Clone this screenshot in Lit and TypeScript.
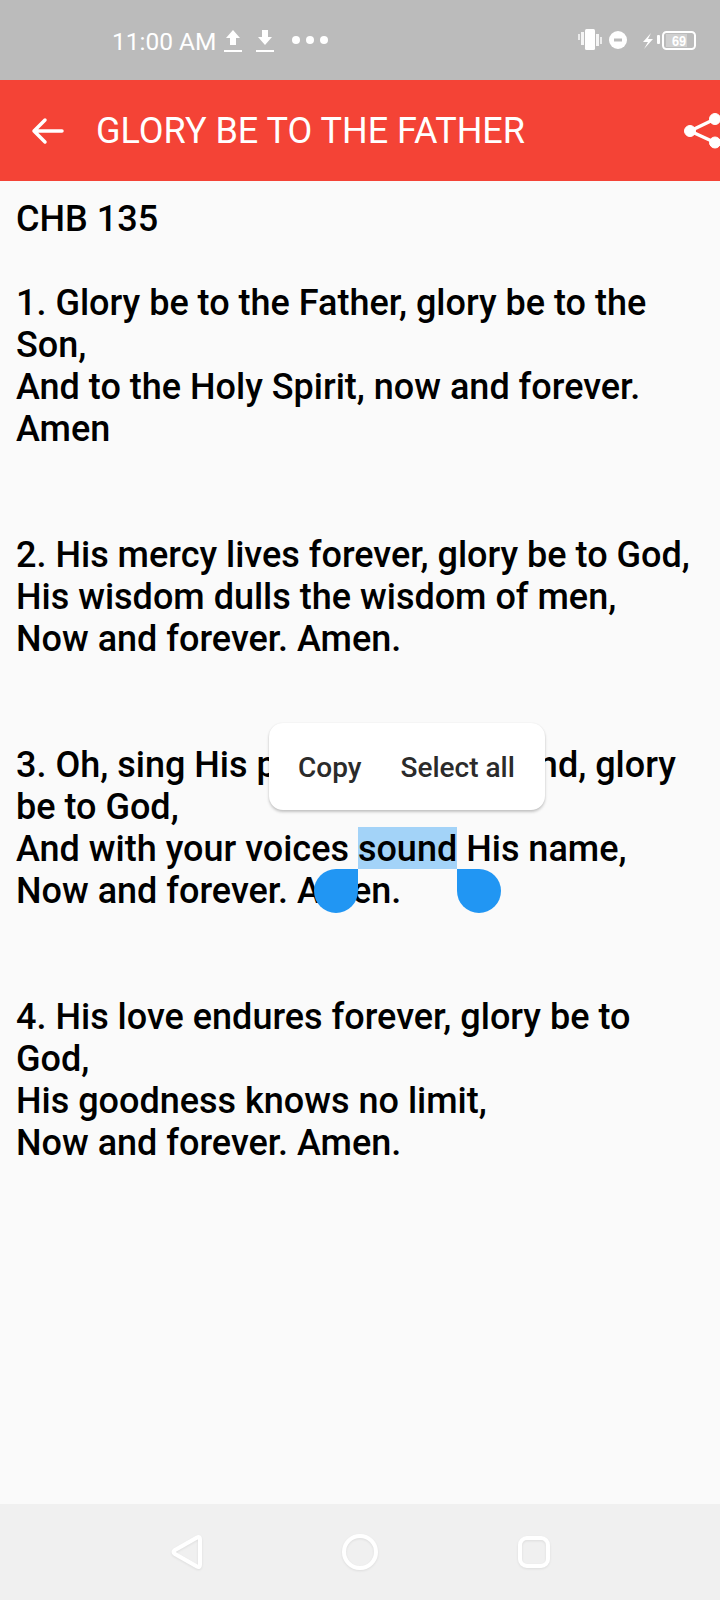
import { LitElement, html, css } from "lit";
import { customElement } from "lit/decorators.js";

@customElement("app-root")
export class AppRoot extends LitElement {
  static styles = css`
    :host { display: block; width: 720px; height: 1600px; font-family: Roboto, sans-serif; }
    .page { width: 720px; height: 1600px; display: flex; flex-direction: column; background: #fafafa; overflow: hidden; position: relative; }
    .status { height: 80px; flex: none; background: #bbbbbb; color: #fff; display: flex; align-items: center; box-sizing: border-box; padding: 0 23px 0 112px; }
    .time { font-size: 24.5px; line-height: 80px; padding-top: 3px; white-space: nowrap; }
    .status svg { display: block; flex: none; }
    .up { margin-left: 7px; }
    .down { margin-left: 12px; }
    .dots { margin-left: 16px; }
    .right { margin-left: auto; }
    .bar { height: 101px; flex: none; background: #f44336; color: #fff; display: flex; align-items: center; box-sizing: border-box; padding-left: 30px; overflow: hidden; }
    .back { display: block; flex: none; }
    .title { font-size: 36px; margin-left: 30px; white-space: nowrap; line-height: 40px; }
    .share { margin-left: auto; flex: none; display: block; }
    .body { flex: 1; box-sizing: border-box; padding: 17px 16px 0 16px; font-size: 36px; font-weight: 500; line-height: 42px; color: #000; white-space: pre-wrap; }
    .sel { background: linear-gradient(#a3d3f8, #a3d3f8) no-repeat; background-size: 100% 42px; padding-top: 1px; }
    .nav { height: 96px; flex: none; background: #f0f0f0; display: flex; align-items: center; justify-content: center; }
    .nav svg { display: block; filter: drop-shadow(0 1px 1px rgba(0,0,0,.08)); }
    .menu { position: absolute; left: 269px; top: 723px; width: 276px; height: 87px; box-sizing: border-box; background: #fff; border-radius: 14px; box-shadow: 0 2px 3px rgba(0,0,0,.22), 0 0 2px rgba(0,0,0,.06); display: flex; align-items: center; padding: 2px 0 0 29px; color: #2b2b2b; font-size: 28px; font-weight: 500; gap: 39px; }
    .h { position: absolute; width: 44px; height: 44px; background: #2196f3; }
    .h1 { left: 314px; top: 869px; border-radius: 22px 0 22px 22px; }
    .h2 { left: 457px; top: 869px; border-radius: 0 22px 22px 22px; }
    .batt { font-family: "Liberation Sans", sans-serif; font-size: 15px; font-weight: 700; fill: #fff; }
  `;

  render() {
    return html`<div class="page">
      <div class="status">
        <span class="time">11:00 AM</span>
        <svg class="up" width="20" height="26" viewBox="0 0 20 26" fill="#fff"><path d="M10 3 L17 11 H13 V18 H7 V11 H3 Z"/><rect x="1" y="23" width="18" height="2"/></svg>
        <svg class="down" width="20" height="26" viewBox="0 0 20 26" fill="#fff"><path d="M7 3 H13 V10 H17 L10 18 L3 10 H7 Z"/><rect x="1" y="23" width="18" height="2"/></svg>
        <svg class="dots" width="38" height="12" viewBox="0 0 38 12" fill="#fff"><circle cx="5" cy="6" r="4"/><circle cx="19" cy="6" r="4"/><circle cx="33" cy="6" r="4"/></svg>
        <svg class="right" width="119" height="30" viewBox="0 0 119 30" fill="#fff">
          <rect x="0" y="9" width="2" height="6" opacity=".7"/><rect x="3" y="7" width="3" height="13" opacity=".85"/>
          <rect x="7" y="4" width="10" height="21" rx="1.500"/>
          <rect x="18" y="9" width="3" height="12" opacity=".85"/><rect x="22" y="12" width="2" height="7" opacity=".7"/>
          <circle cx="40" cy="15" r="9"/><rect x="36" y="13.500" width="8" height="3" fill="#bbb"/>
          <path d="M73 8 L65 17 H70 L66 24 L75 14 H70 Z"/>
          <rect x="79" y="10" width="3" height="9" rx="1"/>
          <rect x="85" y="7" width="32" height="17" rx="3.500" fill="none" stroke="#fff" stroke-width="2"/>
          <rect x="88" y="9" width="21" height="13" fill="#fff" opacity=".3"/>
          <text class="batt" x="0" y="0" text-anchor="middle" transform="translate(101 21) scale(.85 1)">69</text>
        </svg>
      </div>
      <div class="bar">
        <svg class="back" width="36" height="30" viewBox="0 0 36 30" fill="none" stroke="#fff" stroke-width="3.500" stroke-linecap="round" stroke-linejoin="round"><path d="M32 15 H4 M15 4 L4 15 L15 26"/></svg>
        <span class="title">GLORY BE TO THE FATHER</span>
        <svg class="share" width="38" height="40" viewBox="0 0 38 40"><g fill="#fff" stroke="#fff"><circle cx="8" cy="20" r="5.500"/><circle cx="33" cy="8" r="5.500"/><circle cx="33" cy="31.500" r="5.500"/><path d="M8 20 L33 8 M8 20 L33 31.500" stroke-width="3.500" fill="none"/></g></svg>
      </div>
      <div class="body">CHB 135

1. Glory be to the Father, glory be to the
Son,
And to the Holy Spirit, now and forever.
Amen


2. His mercy lives forever, glory be to God,
His wisdom dulls the wisdom of men,
Now and forever. Amen.


3. Oh, sing His praise in all the land, glory
be to God,
And with your voices <span class="sel">sound</span> His name,
Now and forever. Amen.


4. His love endures forever, glory be to
God,
His goodness knows no limit,
Now and forever. Amen.</div>
      <div class="nav">
        <svg width="420" height="96" viewBox="0 0 420 96" fill="none" stroke="#fff" stroke-width="4" stroke-linejoin="round">
          <path d="M25 46 L47 33.500 Q50 32 50 35.500 V60.500 Q50 64 47 62.500 L25 50 Q22 48 25 46 Z"/>
          <circle cx="210" cy="48" r="16"/>
          <rect x="370" y="34" width="28" height="28" rx="7"/>
        </svg>
      </div>
      <div class="menu"><span>Copy</span><span>Select all</span></div>
      <div class="h h1"></div>
      <div class="h h2"></div>
    </div>`;
  }
}
